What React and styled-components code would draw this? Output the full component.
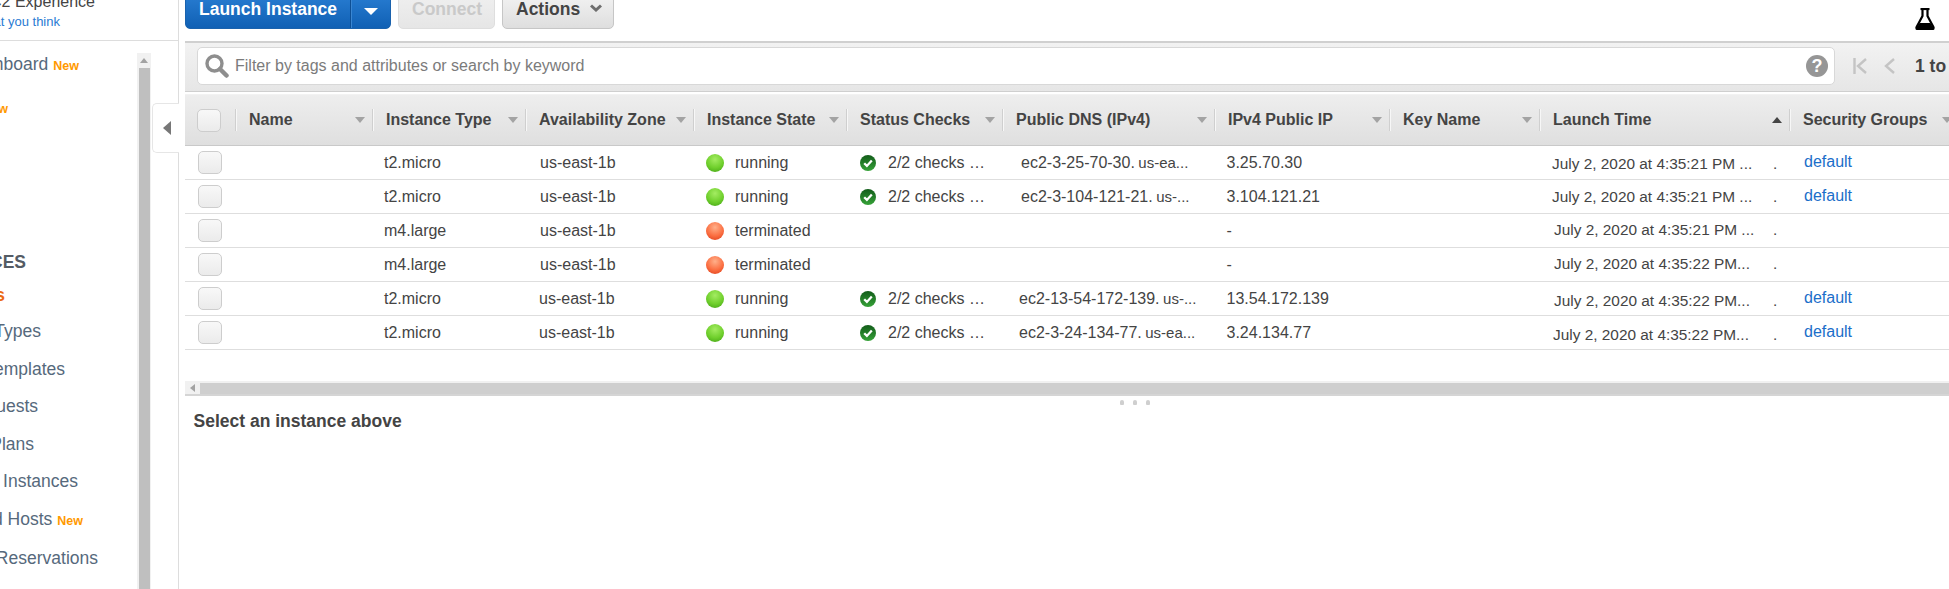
import React from "react";
import styled, { createGlobalStyle } from "styled-components";

// ===== Global =====
const GlobalStyle = createGlobalStyle`
  html, body {
    margin: 0;
    padding: 0;
    background: #fff;
    overflow: hidden;
    font-family: "Liberation Sans", Arial, sans-serif;
  }
`;

const COLUMNS = "50px 137px 153px 168px 153px 156px 212px 175px 150px 250px 170px";

// ===== Page =====
const Page = styled.div`
  display: flex;
  width: 1949px;
  height: 589px;
  overflow: hidden;
`;

// ===== Sidebar =====
const Sidebar = styled.aside`
  position: relative;
  flex: 0 0 178px;
  display: flex;
  flex-direction: column;
  border-right: 1px solid #ddd;
`;

const Banner = styled.div`
  flex: 0 0 40px;
  border-bottom: 1px solid #ddd;
  overflow: hidden;
`;

const BannerLine = styled.div`
  display: flex;
  justify-content: flex-end;
  width: ${({ $end }) => $end}px;
  height: ${({ $h }) => $h}px;
  margin-top: ${({ $top }) => $top || 0}px;
  line-height: ${({ $h }) => $h}px;
  font-size: ${({ $size }) => $size}px;
  white-space: nowrap;
  color: ${({ $color }) => $color};
`;

const SideBody = styled.div`
  flex: 1;
  display: flex;
  min-height: 0;
`;

const Nav = styled.nav`
  flex: 0 0 137px;
  overflow: hidden;
`;

const NavItem = styled.div`
  display: flex;
  justify-content: flex-end;
  align-items: center;
  gap: 5px;
  width: ${({ $end }) => $end}px;
  height: ${({ $h }) => $h || 37.5}px;
  margin-top: ${({ $top }) => $top || 0}px;
  font-size: 17.5px;
  white-space: nowrap;
  color: ${({ $color }) => $color || "#56697c"};
  font-weight: ${({ $bold }) => ($bold ? 700 : 400)};
`;

const NewTag = styled.span`
  flex: none;
  color: #ff9900;
  font-size: 12.5px;
  font-weight: 700;
  padding-top: 3px;
`;

const SideScroll = styled.div`
  flex: 0 0 14px;
  margin-top: 12px;
  display: flex;
  flex-direction: column;
  background: #f1f1f1;
`;

const ScrollUp = styled.div`
  flex: 0 0 15px;
  display: flex;
  align-items: center;
  justify-content: center;
  &::before {
    content: "";
    border-left: 4px solid transparent;
    border-right: 4px solid transparent;
    border-bottom: 5px solid #a3a3a3;
  }
`;

const SideThumb = styled.div`
  flex: 1;
  margin: 0 1px 0 2px;
  background: #bfbfbf;
`;

const CollapseTab = styled.div`
  position: absolute;
  left: 152px;
  top: 103px;
  width: 27px;
  height: 50px;
  box-sizing: border-box;
  display: flex;
  align-items: center;
  padding-left: 10px;
  background: #fff;
  border: 1px solid #e6e6e6;
  border-right: 0;
  border-radius: 5px 0 0 5px;
  &::before {
    content: "";
    border-top: 7.5px solid transparent;
    border-bottom: 7.5px solid transparent;
    border-right: 8px solid #777;
  }
`;

// ===== Main =====
const Main = styled.main`
  flex: 1;
  min-width: 0;
  padding-left: 6px;
  display: flex;
  flex-direction: column;
  overflow: hidden;
`;

const Toolbar = styled.div`
  flex: 0 0 41px;
  display: flex;
  align-items: flex-start;
  gap: 7px;
  position: relative;
`;

const ButtonGroup = styled.div`
  display: flex;
  margin-top: -9px;
  height: 38px;
  width: 206px;
  box-sizing: border-box;
  color: #fff;
  font-size: 17.5px;
  font-weight: 700;
  background: linear-gradient(#2a7fd4, #1060b4);
  border: 1px solid #1a62ad;
  border-radius: 5px;
`;

const LaunchLabel = styled.div`
  flex: 0 0 165px;
  box-sizing: border-box;
  padding-left: 13px;
  line-height: 35px;
  border-right: 1px solid #0e4f94;
`;

const LaunchCaret = styled.div`
  flex: 1;
  display: flex;
  align-items: center;
  justify-content: center;
  padding-bottom: 4px;
  border-left: 1px solid #3a86d2;
  &::before {
    content: "";
    margin-top: 6px;
    border-left: 7px solid transparent;
    border-right: 7px solid transparent;
    border-top: 7px solid #fff;
  }
`;

const ToolButton = styled.div`
  display: flex;
  align-items: flex-start;
  gap: 10px;
  margin-top: -9px;
  height: 38px;
  width: ${({ $w }) => $w}px;
  box-sizing: border-box;
  padding-left: 13px;
  line-height: 35px;
  font-size: 17.5px;
  font-weight: 700;
  color: ${({ $off }) => ($off ? "#c9c9c9" : "#444")};
  background: ${({ $off }) =>
    $off ? "linear-gradient(#f0f0f0, #e6e6e6)" : "linear-gradient(#f4f4f4, #dedede)"};
  border: 1px solid ${({ $off }) => ($off ? "#dedede" : "#c6c6c6")};
  border-radius: 5px;
  svg {
    margin-top: 12px;
  }
`;

const Flask = styled.svg`
  position: absolute;
  left: 1730px;
  top: 8px;
`;

const FilterBar = styled.div`
  flex: 0 0 51px;
  box-sizing: border-box;
  display: flex;
  align-items: center;
  padding: 0 13px 2px;
  border-top: 2px solid #d0d0d0;
  border-bottom: 1px solid #cfcfcf;
  background: linear-gradient(#f2f2f2, #e6e6e6);
`;

const SearchBox = styled.div`
  flex: 0 0 1638px;
  height: 38px;
  box-sizing: border-box;
  display: flex;
  align-items: center;
  padding: 0 6px 0 7px;
  margin-left: -1px;
  background: #fff;
  border: 1px solid #d8d8d8;
  border-radius: 5px;
  font-size: 16px;
  color: #7b7b7b;
`;

const Placeholder = styled.span`
  flex: 1;
  margin-left: 6px;
`;

const HelpDot = styled.span`
  width: 22px;
  height: 22px;
  border-radius: 50%;
  background: #969696;
  color: #fff;
  font-size: 18px;
  font-weight: 700;
  line-height: 22px;
  text-align: center;
`;

const Pager = styled.div`
  display: flex;
  align-items: center;
  margin-left: 18px;
  white-space: nowrap;
  font-size: 17.5px;
  font-weight: 700;
  color: #444;
`;

const PagerSpace = styled.span`
  width: ${({ $w }) => $w}px;
`;

const Table = styled.div`
  flex: none;
  margin-top: 2px;
  width: 1800px;
`;

const HeaderRow = styled.div`
  display: grid;
  grid-template-columns: ${COLUMNS};
  height: 52px;
  box-sizing: border-box;
  border-top: 1px solid #f2f2f2;
  border-bottom: 1px solid #c9c9c9;
  background: linear-gradient(#eeeeee, #dfdfdf);
`;

const HeaderCell = styled.div`
  display: flex;
  align-items: center;
  padding-right: 7px;
  font-size: 16px;
  font-weight: 700;
  color: #444;
  white-space: nowrap;
`;

const Separator = styled.span`
  flex: none;
  width: 1px;
  height: 22px;
  margin-right: 13px;
  background: #cfcfcf;
  box-shadow: 1px 0 0 #f7f7f7;
`;

const SortArrow = styled.span`
  flex: none;
  margin-left: auto;
  border-left: 5px solid transparent;
  border-right: 5px solid transparent;
  ${({ $up }) =>
    $up ? "border-bottom: 6px solid #444;" : "border-top: 6px solid #a3a3a3;"}
`;

const Check = styled.span`
  display: block;
  width: 24px;
  height: 23px;
  box-sizing: border-box;
  background: linear-gradient(#f8f8f8, #ebebeb);
  border: 1px solid #cdcdcd;
  border-radius: 5px;
`;

const Row = styled.div`
  display: grid;
  grid-template-columns: ${COLUMNS};
  height: 34px;
  box-sizing: border-box;
  align-items: center;
  border-bottom: 1px solid #dedede;
  font-size: 16px;
  color: #444;
`;

const Cell = styled.div`
  display: flex;
  align-items: center;
  padding-left: ${({ $pad }) => $pad || 0}px;
  white-space: nowrap;
  overflow: hidden;
`;

const StateDot = styled.span`
  flex: none;
  width: 18px;
  height: 18px;
  margin-right: 11px;
  border-radius: 50%;
  background: ${({ $on }) =>
    $on
      ? "radial-gradient(circle at 50% 30%, #a4ec62, #6fcf2c 55%, #43a316 95%)"
      : "radial-gradient(circle at 50% 30%, #ffb08a, #fb6f42 55%, #de3f1a 95%)"};
`;

const CheckIcon = styled.svg`
  flex: none;
  margin-right: 12px;
`;

const DnsRest = styled.span`
  margin-left: 3.5px;
  font-size: 15px;
`;

const TimeCell = styled.div`
  display: flex;
  font-size: 15.4px;
  white-space: nowrap;
  padding-left: ${({ $pad }) => $pad}px;
  padding-top: ${({ $dy }) => Math.max($dy, 0) * 2}px;
  padding-bottom: ${({ $dy }) => Math.max(-$dy, 0) * 2}px;
`;

const TimeText = styled.span`
  flex: 0 0 ${({ $w }) => $w}px;
`;

const GroupCell = styled.div`
  padding: 0 0 2px 15px;
`;

const GroupLink = styled.a`
  color: #1b6ec9;
`;

const HScroll = styled.div`
  flex: 0 0 13px;
  display: flex;
  margin-top: 31px;
  background: #f1f1f1;
  align-items: flex-end;
`;

const HScrollLeft = styled.div`
  flex: 0 0 15px;
  display: flex;
  align-items: center;
  justify-content: center;
  height: 13px;
  &::before {
    content: "";
    border-top: 4px solid transparent;
    border-bottom: 4px solid transparent;
    border-right: 5px solid #a3a3a3;
  }
`;

const HThumb = styled.div`
  flex: 1;
  height: 11px;
  background: #cfcfcf;
`;

const Splitter = styled.div`
  flex: 0 0 13px;
  display: flex;
  justify-content: center;
  gap: 9px;
  padding: 4px 0 0 136px;
  box-sizing: border-box;
  border-top: 2px solid #d5d5d5;
`;

const Grip = styled.span`
  width: 4px;
  height: 5px;
  border-radius: 2px 2px 1px 1px;
  background: #cfcfcf;
`;

const DetailTitle = styled.div`
  padding: 4px 0 0 8.5px;
  font-size: 17.5px;
  font-weight: 700;
  color: #444;
`;

// ===== Data =====
const headers = [
  "Name",
  "Instance Type",
  "Availability Zone",
  "Instance State",
  "Status Checks",
  "Public DNS (IPv4)",
  "IPv4 Public IP",
  "Key Name",
  "Launch Time",
  "Security Groups",
];

const rows = [
  { type: "t2.micro", zone: 15, on: true, dns: 19, host: "ec2-3-25-70-30.", rest: "us-ea...", ip: "3.25.70.30", time: "July 2, 2020 at 4:35:21 PM ...", tx: 13, dy: 1 },
  { type: "t2.micro", zone: 15, on: true, dns: 19, host: "ec2-3-104-121-21.", rest: "us-...", ip: "3.104.121.21", time: "July 2, 2020 at 4:35:21 PM ...", tx: 13, dy: 0 },
  { type: "m4.large", zone: 15, on: false, ip: "-", time: "July 2, 2020 at 4:35:21 PM ...", tx: 15, dy: -1 },
  { type: "m4.large", zone: 15, on: false, ip: "-", time: "July 2, 2020 at 4:35:22 PM...", tx: 15, dy: -1 },
  { type: "t2.micro", zone: 14, on: true, dns: 17, host: "ec2-13-54-172-139.", rest: "us-...", ip: "13.54.172.139", time: "July 2, 2020 at 4:35:22 PM...", tx: 15, dy: 2 },
  { type: "t2.micro", zone: 14, on: true, dns: 17, host: "ec2-3-24-134-77.", rest: "us-ea...", ip: "3.24.134.77", time: "July 2, 2020 at 4:35:22 PM...", tx: 14, dy: 2 },
];

// ===== Icons =====
function Search() {
  return (
    <svg width="24" height="24" viewBox="0 0 24 24" fill="none">
      <circle cx="9.5" cy="9.5" r="7.5" stroke="#8e8e8e" strokeWidth="3.4" />
      <path d="M15 15l6.5 6.5" stroke="#8e8e8e" strokeWidth="4.5" strokeLinecap="round" />
    </svg>
  );
}

function Chevron() {
  return (
    <svg width="12" height="8" viewBox="0 0 12 8" fill="none">
      <path d="M1 1.5l5 4.5 5-4.5" stroke="#6e6e6e" strokeWidth="3" />
    </svg>
  );
}

function OkIcon({ id }) {
  return (
    <CheckIcon width="16" height="16" viewBox="0 0 16 16">
      <defs>
        <linearGradient id={id} x1="0" y1="0" x2="0" y2="1">
          <stop offset="0" stopColor="#125c1a" />
          <stop offset="1" stopColor="#36a238" />
        </linearGradient>
      </defs>
      <circle cx="8" cy="8" r="8" fill={`url(#${id})`} />
      <path d="M4.2 8.2l2.7 2.7 4.9-5.4" fill="none" stroke="#fff" strokeWidth="2.3" />
    </CheckIcon>
  );
}

export default function App() {
  return (
    <Page>
      <GlobalStyle />
      <Sidebar>
        <Banner>
          <BannerLine $end={95} $h={20} $top={-8} $size={16} $color="#444">
            New EC2 Experience
          </BannerLine>
          <BannerLine $end={60} $h={18} $top={1} $size={13} $color="#2a7bd3">
            Tell us what you think
          </BannerLine>
        </Banner>
        <SideBody>
          <Nav>
            <NavItem $end={79} $h={46}>
              EC2 Dashboard <NewTag>New</NewTag>
            </NavItem>
            <NavItem $end={8} $h={40}>
              Events <NewTag>New</NewTag>
            </NavItem>
            <NavItem $end={26} $h={32} $top={119} $bold $color="#545b64">
              INSTANCES
            </NavItem>
            <NavItem $end={5} $h={34} $bold $color="#ec6a11">
              Instances
            </NavItem>
            <NavItem $end={41} $h={38}>Instance Types</NavItem>
            <NavItem $end={65} $h={38}>Launch Templates</NavItem>
            <NavItem $end={38} $h={37}>Spot Requests</NavItem>
            <NavItem $end={34} $h={38}>Savings Plans</NavItem>
            <NavItem $end={78} $h={37}>Reserved Instances</NavItem>
            <NavItem $end={83} $h={38}>
              Dedicated Hosts <NewTag>New</NewTag>
            </NavItem>
            <NavItem $end={98} $h={41}>Capacity Reservations</NavItem>
          </Nav>
          <SideScroll>
            <ScrollUp />
            <SideThumb />
          </SideScroll>
        </SideBody>
        <CollapseTab />
      </Sidebar>

      <Main>
        <Toolbar>
          <ButtonGroup>
            <LaunchLabel>Launch Instance</LaunchLabel>
            <LaunchCaret />
          </ButtonGroup>
          <ToolButton $w={97} $off>Connect</ToolButton>
          <ToolButton $w={112}>
            Actions <Chevron />
          </ToolButton>
          <Flask width="20" height="22" viewBox="0 0 20 22">
            <path d="M5.5 1h9" stroke="#000" strokeWidth="2.2" />
            <path d="M7.5 1v7L1.6 19c-.5 1 0 2 1.2 2h14.4c1.2 0 1.7-1 1.2-2L12.5 8V1" fill="none" stroke="#000" strokeWidth="2.2" />
            <path d="M4.6 15h10.8l4 6.5H.6z" fill="#000" />
          </Flask>
        </Toolbar>

        <FilterBar>
          <SearchBox>
            <Search />
            <Placeholder>Filter by tags and attributes or search by keyword</Placeholder>
            <HelpDot>?</HelpDot>
          </SearchBox>
          <Pager>
            <svg width="14" height="16" viewBox="0 0 14 16" fill="none">
              <path d="M1.5 0v16M13 1L5 8l8 7" stroke="#c4c4c4" strokeWidth="2.4" />
            </svg>
            <PagerSpace $w={17} />
            <svg width="11" height="16" viewBox="0 0 11 16" fill="none">
              <path d="M10 1L2 8l8 7" stroke="#c4c4c4" strokeWidth="2.4" />
            </svg>
            <PagerSpace $w={20} />
            1 to 6 of 6
          </Pager>
        </FilterBar>

        <Table>
          <HeaderRow>
            <Cell $pad={12}>
              <Check />
            </Cell>
            {headers.map((h) => (
              <HeaderCell key={h}>
                <Separator />
                {h}
                <SortArrow $up={h === "Launch Time"} />
              </HeaderCell>
            ))}
          </HeaderRow>
          {rows.map((r, i) => (
            <Row key={i}>
              <Cell $pad={13}>
                <Check />
              </Cell>
              <Cell />
              <Cell $pad={12}>{r.type}</Cell>
              <Cell $pad={r.zone}>us-east-1b</Cell>
              <Cell $pad={13}>
                <StateDot $on={r.on} />
                {r.on ? "running" : "terminated"}
              </Cell>
              <Cell $pad={14}>
                {r.on && (
                  <>
                    <OkIcon id={`ok-${i}`} />
                    2/2 checks …
                  </>
                )}
              </Cell>
              <Cell $pad={r.dns}>
                {r.host && (
                  <>
                    {r.host}
                    <DnsRest>{r.rest}</DnsRest>
                  </>
                )}
              </Cell>
              <Cell $pad={12.5}>{r.ip}</Cell>
              <Cell />
              <TimeCell $pad={r.tx} $dy={r.dy}>
                <TimeText $w={234 - r.tx}>{r.time}</TimeText>
                .
              </TimeCell>
              <GroupCell>{r.on && <GroupLink>default</GroupLink>}</GroupCell>
            </Row>
          ))}
        </Table>

        <HScroll>
          <HScrollLeft />
          <HThumb />
        </HScroll>
        <Splitter>
          <Grip />
          <Grip />
          <Grip />
        </Splitter>
        <DetailTitle>Select an instance above</DetailTitle>
      </Main>
    </Page>
  );
}
